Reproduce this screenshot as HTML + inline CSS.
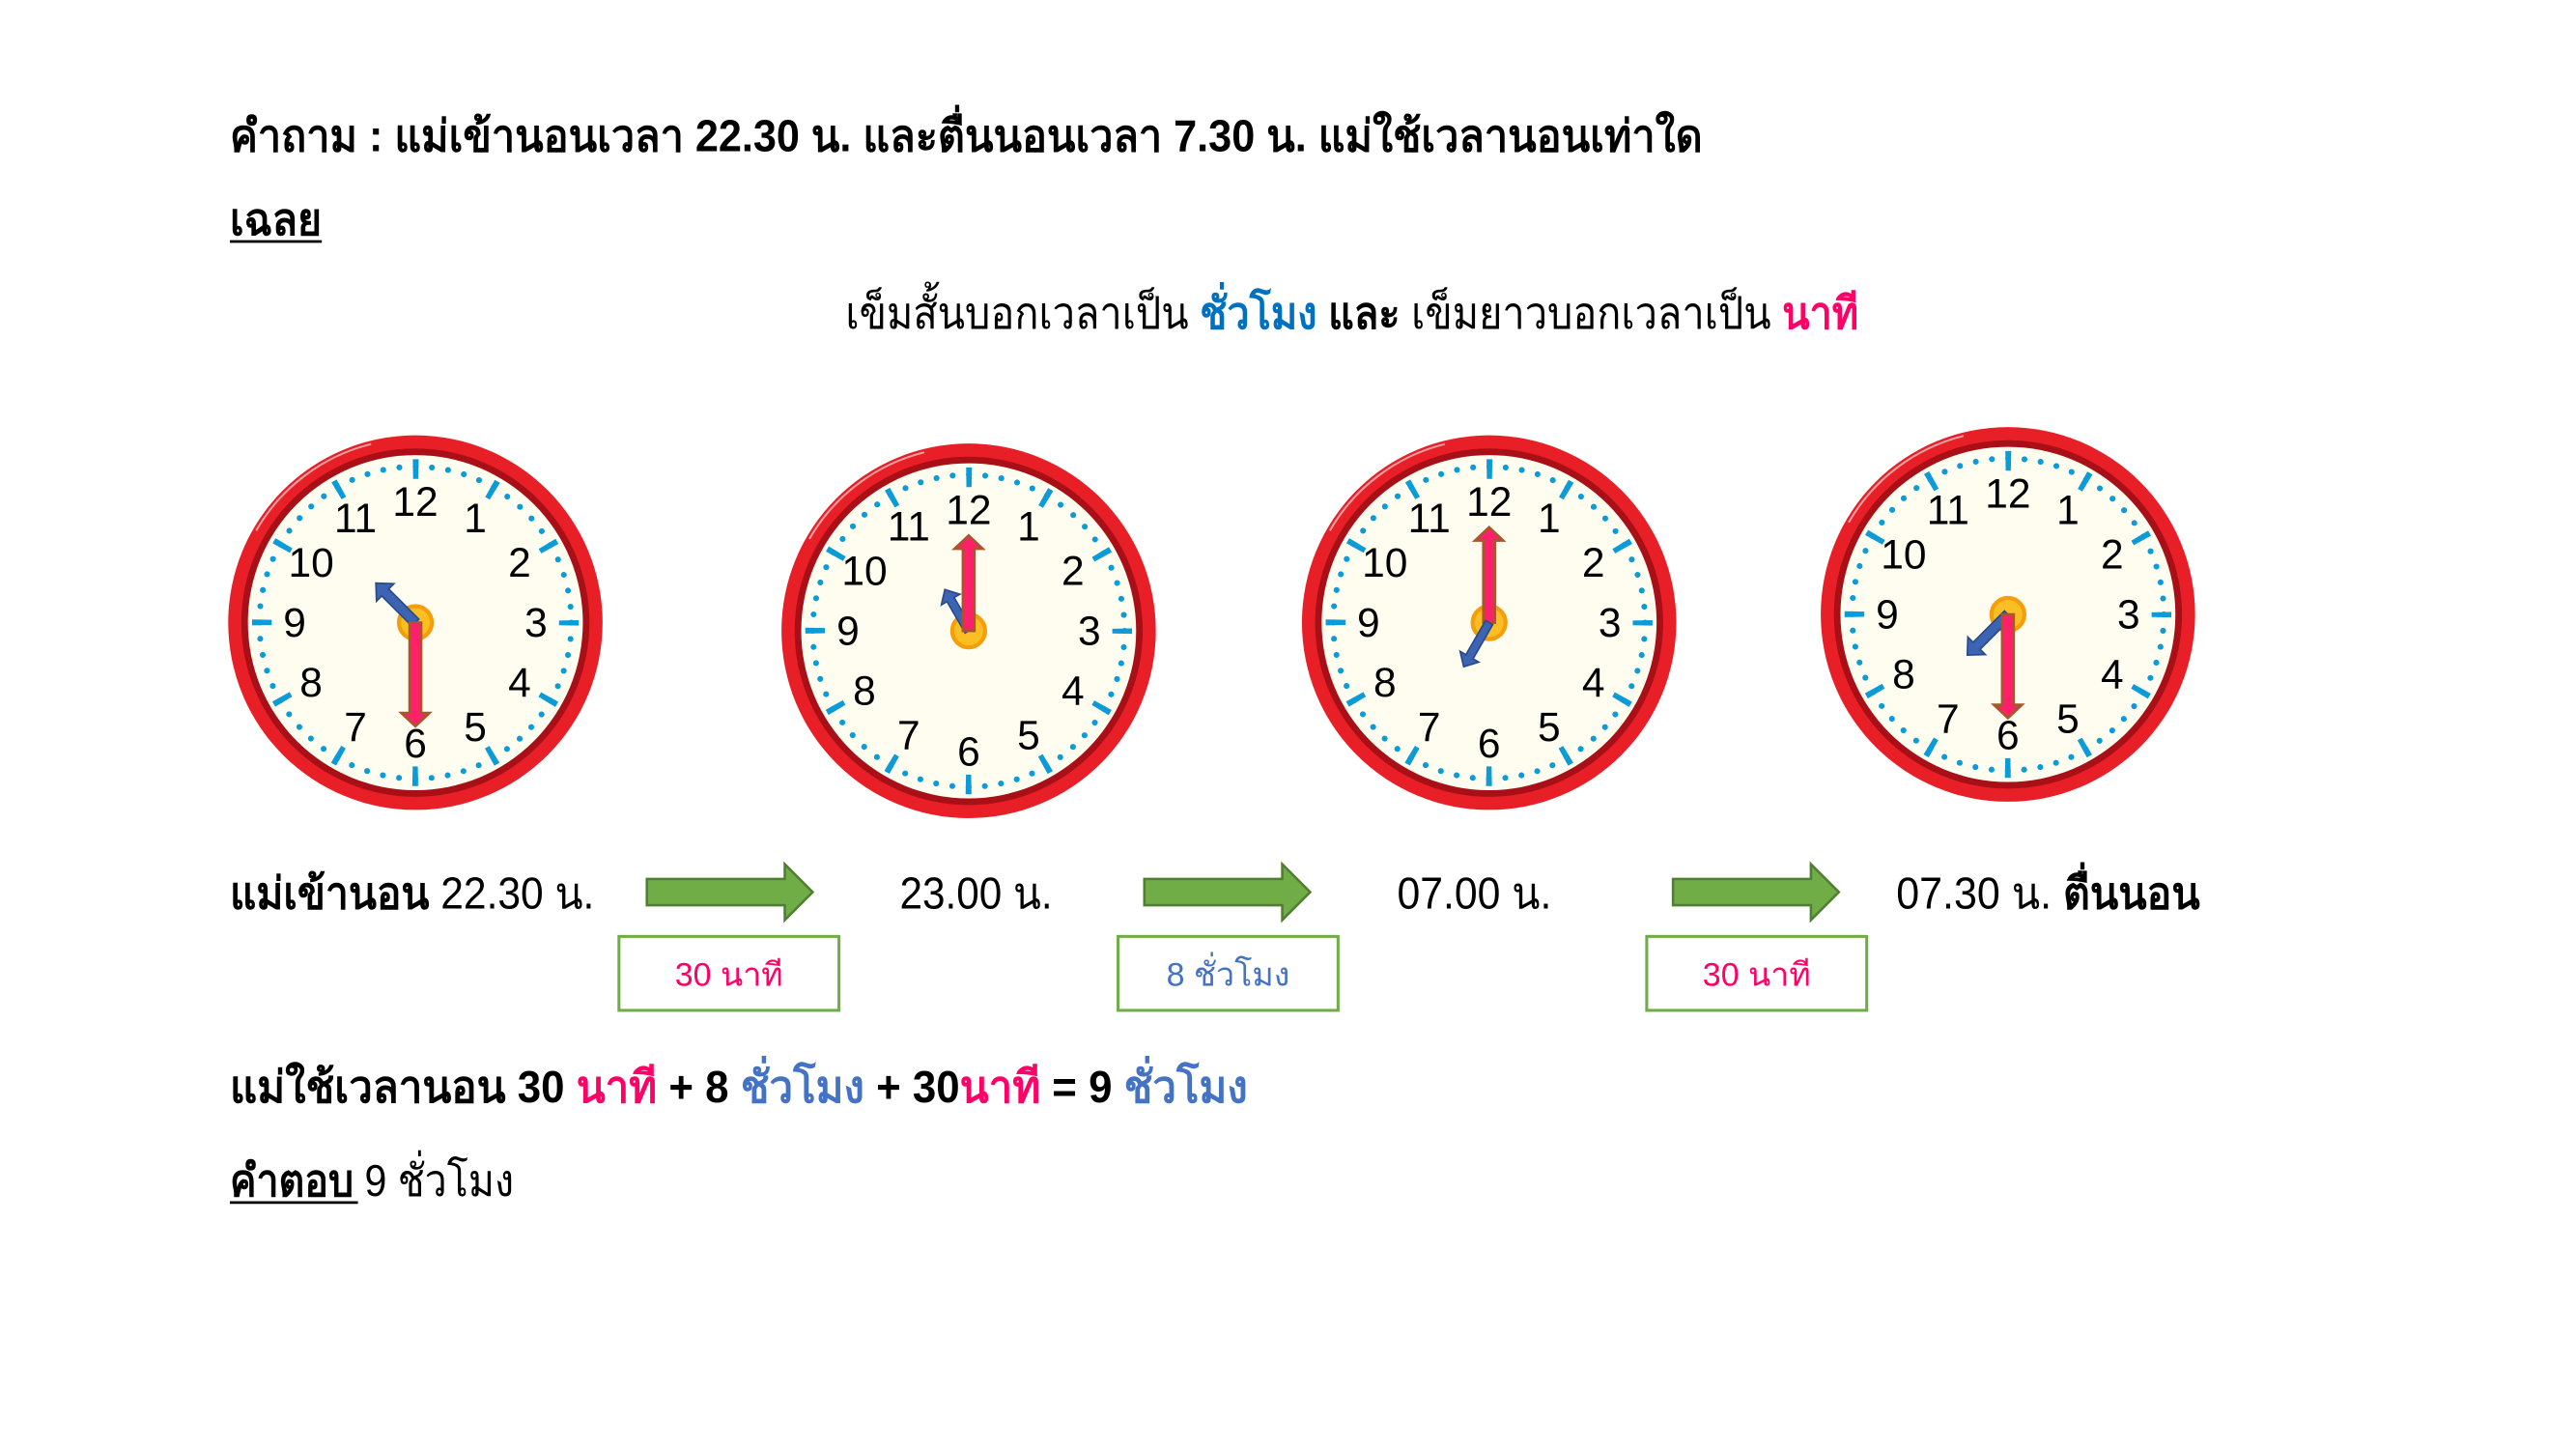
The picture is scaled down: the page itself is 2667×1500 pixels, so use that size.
<!DOCTYPE html>
<html><head><meta charset="utf-8"><style>
html,body{margin:0;padding:0;background:#fff;}
svg{display:block;}
text{font-family:"Liberation Sans","DejaVu Sans","Noto Sans CJK SC",sans-serif;}
</style></head><body>
<svg width="2667" height="1500" viewBox="0 0 1569 882" preserveAspectRatio="none" xmlns="http://www.w3.org/2000/svg">
<defs>
<g id="face">
<circle r="114" fill="#e81f26"/>
<circle r="112" fill="none" stroke="#f7a1a3" stroke-width="1.2" stroke-dasharray="90 700" transform="rotate(-150)"/>
<circle r="106" fill="#a80f16"/>
<circle r="102" fill="#fffdf0"/>
<circle r="95" fill="none" stroke="#0a9bd8" stroke-width="3.6" stroke-linecap="round" stroke-dasharray="0 9.948"/>
<circle r="93.5" fill="none" stroke="#0a9bd8" stroke-width="12" stroke-dasharray="3.4 45.56" stroke-dashoffset="1.7"/>
</g>
</defs>

<!-- Text -->
<text x="140" y="92" font-size="27" font-weight="bold" fill="#000" textLength="897" lengthAdjust="spacingAndGlyphs">คำถาม :  แม่เข้านอนเวลา 22.30 น. และตื่นนอนเวลา 7.30 น. แม่ใช้เวลานอนเท่าใด</text>
<text x="140" y="143" font-size="27" font-weight="bold" fill="#000" textLength="56" lengthAdjust="spacingAndGlyphs">เฉลย</text>
<line x1="140" y1="147" x2="196" y2="147" stroke="#000" stroke-width="1.6"/>
<text x="515" y="200" font-size="27" fill="#000" textLength="617" lengthAdjust="spacingAndGlyphs">เข็มสั้นบอกเวลาเป็น <tspan fill="#0070c0" font-weight="bold">ชั่วโมง</tspan> <tspan font-weight="bold">และ</tspan> เข็มยาวบอกเวลาเป็น <tspan fill="#ff0066" font-weight="bold">นาที</tspan></text>

<!-- Clock 1 -->
<g transform="translate(253,379)">
<use href="#face"/>
<g font-size="25" text-anchor="middle">
<text x="0" y="-65">12</text><text x="36.5" y="-55">1</text><text x="63.5" y="-28">2</text><text x="73.5" y="8.5">3</text><text x="63.5" y="45">4</text><text x="36.5" y="72">5</text><text x="0" y="82">6</text><text x="-36.5" y="72">7</text><text x="-63.5" y="45">8</text><text x="-73.5" y="8.5">9</text><text x="-63.5" y="-28">10</text><text x="-36.5" y="-55">11</text>
</g>
<circle r="10" fill="#fbbf24" stroke="#f59e0b" stroke-width="2.5"/>
<polygon transform="rotate(-45)" points="-3,0 -3,-26 -7.5,-26 0,-34 7.5,-26 3,-26 3,0" fill="#3d63b3" stroke="#2a4a8e" stroke-width="1"/>
<polygon transform="rotate(180)" points="-3.5,0 -3.5,-55 -8.5,-55 0,-63 8.5,-55 3.5,-55 3.5,0" fill="#ff1f6b" stroke="#a8562a" stroke-width="1.6"/>
</g>

<!-- Clock 2 -->
<g transform="translate(590,384)">
<use href="#face"/>
<g font-size="25" text-anchor="middle">
<text x="0" y="-65">12</text><text x="36.5" y="-55">1</text><text x="63.5" y="-28">2</text><text x="73.5" y="8.5">3</text><text x="63.5" y="45">4</text><text x="36.5" y="72">5</text><text x="0" y="82">6</text><text x="-36.5" y="72">7</text><text x="-63.5" y="45">8</text><text x="-73.5" y="8.5">9</text><text x="-63.5" y="-28">10</text><text x="-36.5" y="-55">11</text>
</g>
<circle r="10" fill="#fbbf24" stroke="#f59e0b" stroke-width="2.5"/>
<polygon transform="rotate(-30)" points="-2.5,0 -2.5,-22 -6.5,-22 0,-29 6.5,-22 2.5,-22 2.5,0" fill="#3d63b3" stroke="#2a4a8e" stroke-width="1"/>
<polygon points="-3.5,0 -3.5,-50 -8.5,-50 0,-58 8.5,-50 3.5,-50 3.5,0" fill="#ff1f6b" stroke="#a8562a" stroke-width="1.6"/>
</g>

<!-- Clock 3 -->
<g transform="translate(907,379)">
<use href="#face"/>
<g font-size="25" text-anchor="middle">
<text x="0" y="-65">12</text><text x="36.5" y="-55">1</text><text x="63.5" y="-28">2</text><text x="73.5" y="8.5">3</text><text x="63.5" y="45">4</text><text x="36.5" y="72">5</text><text x="0" y="82">6</text><text x="-36.5" y="72">7</text><text x="-63.5" y="45">8</text><text x="-73.5" y="8.5">9</text><text x="-63.5" y="-28">10</text><text x="-36.5" y="-55">11</text>
</g>
<circle r="10" fill="#fbbf24" stroke="#f59e0b" stroke-width="2.5"/>
<polygon points="-3.5,0 -3.5,-50 -8.5,-50 0,-58 8.5,-50 3.5,-50 3.5,0" fill="#ff1f6b" stroke="#a8562a" stroke-width="1.6"/>
<polygon transform="rotate(210)" points="-2.5,0 -2.5,-24 -6.5,-24 0,-31 6.5,-24 2.5,-24 2.5,0" fill="#3d63b3" stroke="#2a4a8e" stroke-width="1"/>
</g>

<!-- Clock 4 -->
<g transform="translate(1223,374)">
<use href="#face"/>
<g font-size="25" text-anchor="middle">
<text x="0" y="-65">12</text><text x="36.5" y="-55">1</text><text x="63.5" y="-28">2</text><text x="73.5" y="8.5">3</text><text x="63.5" y="45">4</text><text x="36.5" y="72">5</text><text x="0" y="82">6</text><text x="-36.5" y="72">7</text><text x="-63.5" y="45">8</text><text x="-73.5" y="8.5">9</text><text x="-63.5" y="-28">10</text><text x="-36.5" y="-55">11</text>
</g>
<circle r="10" fill="#fbbf24" stroke="#f59e0b" stroke-width="2.5"/>
<polygon transform="rotate(225)" points="-3,0 -3,-27 -7.5,-27 0,-35 7.5,-27 3,-27 3,0" fill="#3d63b3" stroke="#2a4a8e" stroke-width="1"/>
<polygon transform="rotate(180)" points="-3.5,0 -3.5,-55 -8.5,-55 0,-63 8.5,-55 3.5,-55 3.5,0" fill="#ff1f6b" stroke="#a8562a" stroke-width="1.6"/>
</g>

<!-- Time labels -->
<text x="140" y="553" font-size="27" fill="#000" textLength="222" lengthAdjust="spacingAndGlyphs"><tspan font-weight="bold">แม่เข้านอน</tspan> 22.30 น.</text>
<text x="548" y="553" font-size="27" fill="#000" textLength="93" lengthAdjust="spacingAndGlyphs">23.00 น.</text>
<text x="851" y="553" font-size="27" fill="#000" textLength="94" lengthAdjust="spacingAndGlyphs">07.00 น.</text>
<text x="1155" y="553" font-size="27" fill="#000" textLength="185" lengthAdjust="spacingAndGlyphs">07.30 น. <tspan font-weight="bold">ตื่นนอน</tspan></text>

<!-- Arrows -->
<g fill="#70ad47" stroke="#507e32" stroke-width="1.5">
<polygon points="394,535 478,535 478,526 495,543 478,560 478,551 394,551"/>
<polygon points="697,535 781,535 781,526 798,543 781,560 781,551 697,551"/>
<polygon points="1019,535 1103,535 1103,526 1120,543 1103,560 1103,551 1019,551"/>
</g>

<!-- Boxes -->
<g fill="#fff" stroke="#70ad47" stroke-width="1.8">
<rect x="377" y="570" width="134" height="45"/>
<rect x="681" y="570" width="134" height="45"/>
<rect x="1003" y="570" width="134" height="45"/>
</g>
<text x="444" y="600" font-size="20" text-anchor="middle" fill="#ff0066">30 นาที</text>
<text x="748" y="600" font-size="20" text-anchor="middle" fill="#4472c4">8 ชั่วโมง</text>
<text x="1070" y="600" font-size="20" text-anchor="middle" fill="#ff0066">30 นาที</text>

<!-- Equation -->
<text x="140" y="671" font-size="27" font-weight="bold" fill="#000" textLength="620" lengthAdjust="spacingAndGlyphs">แม่ใช้เวลานอน 30 <tspan fill="#ff0066">นาที</tspan> + 8 <tspan fill="#4472c4">ชั่วโมง</tspan> + 30<tspan fill="#ff0066">นาที</tspan> = 9 <tspan fill="#4472c4">ชั่วโมง</tspan></text>
<text x="140" y="728" font-size="27" fill="#000" textLength="173" lengthAdjust="spacingAndGlyphs"><tspan font-weight="bold">คำตอบ</tspan> 9 ชั่วโมง</text>
<line x1="140" y1="732" x2="218" y2="732" stroke="#000" stroke-width="1.6"/>
</svg>
</body></html>
